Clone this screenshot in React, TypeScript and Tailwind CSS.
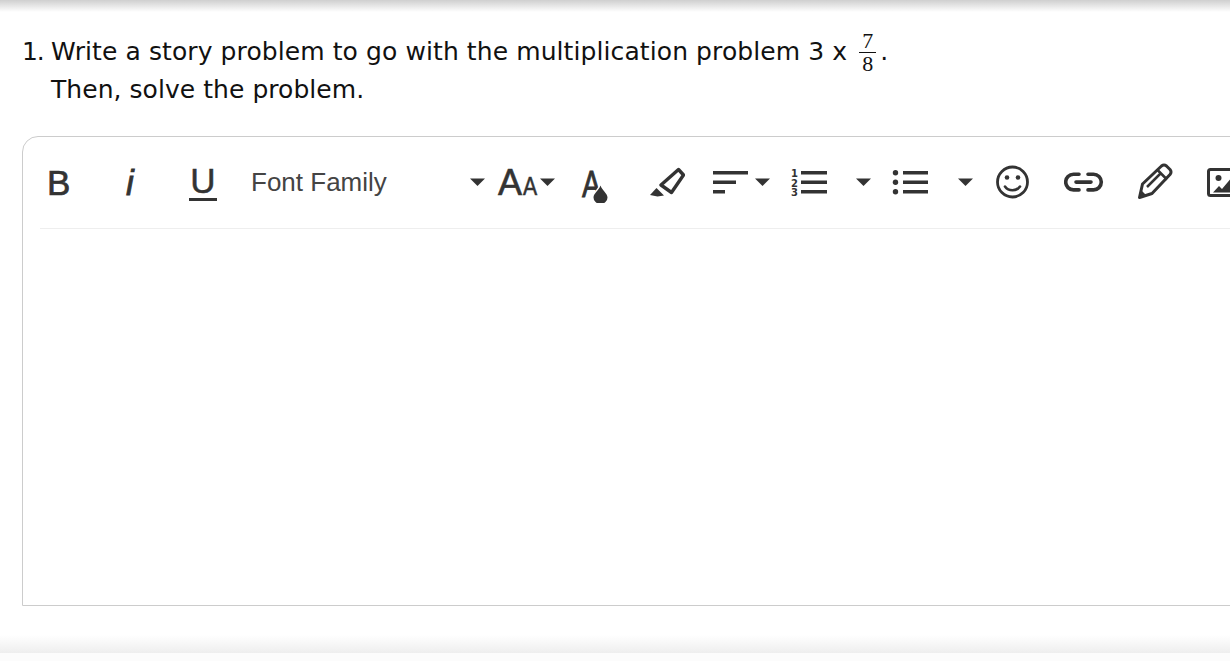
const iconColor = '#333333';

function Caret({ x }: { x: number }) {
  return (
    <svg width={15} height={41} viewBox={`${x} 162 15 41`} className="shrink-0">
      <path d={`M${x} 178.5h15l-7.5 7.5z`} fill={iconColor} />
    </svg>
  );
}

function Icon({ x, w, children }: { x: number; w: number; children: React.ReactNode }) {
  return (
    <svg width={w} height={41} viewBox={`${x} 162 ${w} 41`} className="shrink-0 overflow-hidden">
      {children}
    </svg>
  );
}

function Toolbar() {
  return (
    <div className="mx-[17px] flex h-[92px] items-center border-b border-[#eeeeee] font-['Liberation_Sans',sans-serif] text-[#333333]">
      <span className="ml-[7px] w-[24px] text-[35px] leading-none [-webkit-text-stroke:0.7px_#333333]">B</span>
      <span className="ml-[55px] w-[12px] text-[35px] leading-none italic [-webkit-text-stroke:0.8px_#333333]">i</span>
      <span className="ml-[51px] w-[28px] border-b-[3px] border-[#333333] text-center text-[35px] leading-[34px] [-webkit-text-stroke:0.5px_#333333]">U</span>
      <span className="-mt-[2px] ml-[34px] w-[219px] text-[26px] leading-none text-[#444444]">Font Family</span>
      <Caret x={470} />

      {/* font size */}
      <span className="ml-[13px] w-[25px] text-[36px] leading-none [-webkit-text-stroke:0.6px_#333333]">A</span>
      <span className="mt-[8px] w-[17px] origin-left scale-x-[0.85] text-[25px] leading-none [-webkit-text-stroke:0.5px_#333333]">A</span>
      <Caret x={541} />

      {/* font colour */}
      <div className="relative ml-[26px] h-[41px] w-[30px] shrink-0">
        <span className="absolute top-[5px] left-[1px] origin-left scale-x-[0.78] text-[36px] leading-none [-webkit-text-stroke:0.8px_#333333]">A</span>
        <svg width={30} height={41} viewBox="582 162 30 41" className="absolute top-0 left-0">
          <path
            d="M601.500 185.500c1.500 4.500 7 8 7 12a7 6.500 0 0 1-14 0c0-4 5.500-7.500 7-12z"
            fill={iconColor}
            stroke="#ffffff"
            strokeWidth={2.500}
            paintOrder="stroke"
          />
        </svg>
      </div>

      {/* highlighter */}
      <div className="ml-[38px] shrink-0">
        <Icon x={650} w={36}>
          <path d="M679.500 169.500l5 5.500-12 17.500-10.500-7.500z" fill="none" stroke={iconColor} strokeWidth={3.400} strokeLinejoin="round" />
          <path d="M651 195l6.500-7 7.500 7.500-6.500 1z" fill={iconColor} />
        </Icon>
      </div>

      {/* align */}
      <div className="ml-[28px] shrink-0">
        <Icon x={713} w={36}>
          <path d="M713 172.800h35M713 182.300h23M713 191.800h12" stroke={iconColor} strokeWidth={3.500} />
        </Icon>
      </div>
      <div className="ml-[6px] shrink-0">
        <Caret x={755} />
      </div>

      {/* numbered list */}
      <div className="ml-[20px] shrink-0">
        <Icon x={790} w={38}>
          <path d="M801 172.800h26M801 182.300h26M801 191.800h26" stroke={iconColor} strokeWidth={3.500} />
          <g fontFamily="'DejaVu Sans',sans-serif" fontWeight={700} fontSize={10} fill={iconColor}>
            <text x={791} y={177}>1</text>
            <text x={791} y={186.500}>2</text>
            <text x={791} y={196}>3</text>
          </g>
        </Icon>
      </div>
      <div className="ml-[28px] shrink-0">
        <Caret x={856} />
      </div>

      {/* bullet list */}
      <div className="ml-[21px] shrink-0">
        <Icon x={892} w={37}>
          <path d="M903 172.800h25M903 182.300h25M903 191.800h25" stroke={iconColor} strokeWidth={3.500} />
          <circle cx={895.500} cy={172.800} r={2.700} fill={iconColor} />
          <circle cx={895.500} cy={182.300} r={2.700} fill={iconColor} />
          <circle cx={895.500} cy={191.800} r={2.700} fill={iconColor} />
        </Icon>
      </div>
      <div className="ml-[29px] shrink-0">
        <Caret x={958} />
      </div>

      {/* emoji */}
      <div className="ml-[23px] shrink-0">
        <Icon x={996} w={34}>
          <circle cx={1012.500} cy={182} r={15} fill="none" stroke={iconColor} strokeWidth={2.800} />
          <circle cx={1007} cy={177.500} r={2.300} fill={iconColor} />
          <circle cx={1018} cy={177.500} r={2.300} fill={iconColor} />
          <path d="M1005 186.500c3.500 5 11.500 5 15 0" fill="none" stroke={iconColor} strokeWidth={2.600} strokeLinecap="round" />
        </Icon>
      </div>

      {/* link */}
      <div className="ml-[34px] shrink-0">
        <Icon x={1064} w={40}>
          <path
            d="M1079 174.300h-5.500a7.800 7.800 0 0 0 0 15.600h5.500M1088 174.300h5.500a7.800 7.800 0 0 1 0 15.600h-5.500M1076 182.100h15"
            fill="none"
            stroke={iconColor}
            strokeWidth={3.600}
            strokeLinecap="round"
          />
        </Icon>
      </div>

      {/* pencil */}
      <div className="ml-[33px] shrink-0">
        <Icon x={1137} w={36}>
          <path
            d="M1139.500 197.500l3-13.500 19-18q2.500-2 5 0l3.500 3.500q2 2.500 0 5l-18 19z"
            fill="none"
            stroke={iconColor}
            strokeWidth={3}
            strokeLinejoin="round"
          />
          <path d="M1157.500 170l9.500 9.500M1147 187l14-14" fill="none" stroke={iconColor} strokeWidth={2.500} />
          <path d="M1139 198l2-8 6 6z" fill={iconColor} />
        </Icon>
      </div>

      {/* image */}
      <div className="ml-[34px] shrink-0">
        <Icon x={1207} w={36}>
          <rect x={1208.500} y={169.500} width={32} height={26} rx={2} fill="none" stroke={iconColor} strokeWidth={3} />
          <circle cx={1218.500} cy={178} r={3} fill={iconColor} />
          <path d="M1213 192.500l6-6.500 3 3 8-9.500 9 10v3z" fill={iconColor} />
        </Icon>
      </div>
    </div>
  );
}

export default function App() {
  return (
    <div className="flex h-[661px] w-[1230px] flex-col overflow-hidden bg-white font-['DejaVu_Sans',sans-serif]">
      <div className="h-[12px] shrink-0 bg-linear-to-b from-[#cfcfcf] to-white" />

      <div className="flex pt-[21px] pl-[22px] text-[25px] leading-[38px] text-[#111111]">
        <span className="w-[29px] shrink-0 tracking-[-1.2px]">1.</span>
        <div>
          <div className="flex h-[38px] items-start">
            <span className="tracking-[0.09px] whitespace-pre">Write a story problem to go with the multiplication problem 3 x </span>
            <span className="-mt-[3px] ml-[4px] inline-flex w-[17px] flex-col items-center font-['Liberation_Serif',serif] text-[22px] leading-[22px]">
              <span className="w-full border-b border-[#111111] text-center">7</span>
              <span>8</span>
            </span>
            <span className="ml-[4px]">.</span>
          </div>
          <div className="tracking-[0.05px]">Then, solve the problem.</div>
        </div>
      </div>

      <div className="mt-[27px] ml-[22px] h-[470px] w-[1300px] shrink-0 rounded-tl-[16px] border border-[#cccccc]">
        <Toolbar />
      </div>

      <div className="flex-1" />
      <div className="h-[18px] shrink-0 bg-linear-to-b from-white to-[#eeeeee]" />
      <div className="h-[8px] shrink-0 bg-[#fcfcfc]" />
    </div>
  );
}
